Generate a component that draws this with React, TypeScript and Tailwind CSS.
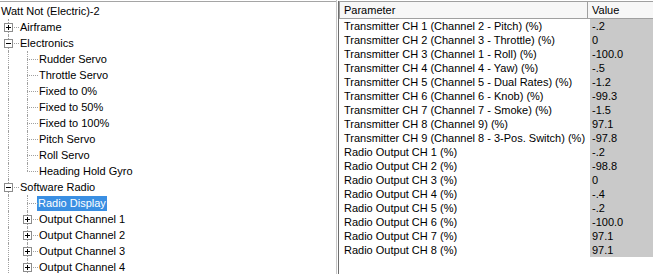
import React from 'react'

type Node = {
  label: string
  guides: boolean[] // ancestor levels that still have siblings below
  last: boolean
  expander?: '+' | '-'
  selected?: boolean
}

const tree: Node[] = [
  { label: 'Airframe', guides: [], last: false, expander: '+' },
  { label: 'Electronics', guides: [], last: false, expander: '-' },
  { label: 'Rudder Servo', guides: [true], last: false },
  { label: 'Throttle Servo', guides: [true], last: false },
  { label: 'Fixed to 0%', guides: [true], last: false },
  { label: 'Fixed to 50%', guides: [true], last: false },
  { label: 'Fixed to 100%', guides: [true], last: false },
  { label: 'Pitch Servo', guides: [true], last: false },
  { label: 'Roll Servo', guides: [true], last: false },
  { label: 'Heading Hold Gyro', guides: [true], last: true },
  { label: 'Software Radio', guides: [], last: false, expander: '-' },
  { label: 'Radio Display', guides: [true], last: false, selected: true },
  { label: 'Output Channel 1', guides: [true], last: false, expander: '+' },
  { label: 'Output Channel 2', guides: [true], last: false, expander: '+' },
  { label: 'Output Channel 3', guides: [true], last: false, expander: '+' },
  { label: 'Output Channel 4', guides: [true], last: false, expander: '+' },
]

const params: [string, string][] = [
  ['Transmitter CH 1 (Channel 2 - Pitch) (%)', '-.2'],
  ['Transmitter CH 2 (Channel 3 - Throttle) (%)', '0'],
  ['Transmitter CH 3 (Channel 1 - Roll) (%)', '-100.0'],
  ['Transmitter CH 4 (Channel 4 - Yaw) (%)', '-.5'],
  ['Transmitter CH 5 (Channel 5 - Dual Rates) (%)', '-1.2'],
  ['Transmitter CH 6 (Channel 6 - Knob) (%)', '-99.3'],
  ['Transmitter CH 7 (Channel 7 - Smoke) (%)', '-1.5'],
  ['Transmitter CH 8 (Channel 9) (%)', '97.1'],
  ['Transmitter CH 9 (Channel 8 - 3-Pos. Switch) (%)', '-97.8'],
  ['Radio Output CH 1 (%)', '-.2'],
  ['Radio Output CH 2 (%)', '-98.8'],
  ['Radio Output CH 3 (%)', '0'],
  ['Radio Output CH 4 (%)', '-.4'],
  ['Radio Output CH 5 (%)', '-.2'],
  ['Radio Output CH 6 (%)', '-100.0'],
  ['Radio Output CH 7 (%)', '97.1'],
  ['Radio Output CH 8 (%)', '97.1'],
]

function Guide() {
  return (
    <div className="relative w-[19px] h-4 shrink-0">
      <div className="absolute left-[8px] top-0 h-4 border-l border-dotted border-[#a0a0a0]" />
    </div>
  )
}

function Connector({ last, expander }: { last: boolean; expander?: '+' | '-' }) {
  return (
    <div className="relative w-[19px] h-4 shrink-0">
      {/* vertical line */}
      <div
        className={
          last
            ? 'absolute left-[8px] top-0 h-[8px] border-l border-dotted border-[#a0a0a0]'
            : 'absolute left-[8px] top-0 h-4 border-l border-dotted border-[#a0a0a0]'
        }
      />
      {/* horizontal line */}
      <div className="absolute left-[8px] top-[8px] w-[11px] border-t border-dotted border-[#a0a0a0]" />
      {expander && (
        <div className="absolute left-[4px] top-[4px] w-[9px] h-[9px] border border-[#8c8c8c] bg-white">
          <div className="absolute left-[1px] top-[3px] w-[5px] h-px bg-black" />
          {expander === '+' && <div className="absolute left-[3px] top-[1px] w-px h-[5px] bg-black" />}
        </div>
      )}
    </div>
  )
}

export default function App() {
  return (
    <div className="w-[653px] h-[274px] bg-white flex overflow-hidden text-[11px] text-black leading-none" style={{ fontFamily: '"Liberation Sans", Arial, sans-serif' }}>
      {/* Tree */}
      <div className="w-[336px] shrink-0 mt-px border-t border-[#a5a5a5] pt-px">
        <div className="h-4 flex items-center pl-px">Watt Not (Electric)-2</div>
        {tree.map((n, i) => (
          <div key={i} className="h-4 flex items-center">
            {n.guides.map((g, j) => (g ? <Guide key={j} /> : <div key={j} className="w-[19px] shrink-0" />))}
            <Connector last={n.last} expander={n.expander} />
            <span className={n.selected ? 'bg-[#3a8fe3] text-white h-[15px] flex items-center px-px -ml-px' : 'pl-px'}>
              {n.label}
            </span>
          </div>
        ))}
      </div>

      {/* Splitter */}
      <div className="w-[2px] shrink-0 border-l border-[#c8c8c8]" />

      {/* Property grid */}
      <div className="flex-1 border-l border-[#6e6e6e] mt-px">
        <div className="flex h-[18px] border-t border-b border-[#a0a0a0] bg-[#f7f7f7]">
          <div className="w-[249px] shrink-0 border-l border-r border-[#a0a0a0] flex items-center pl-[4px]">Parameter</div>
          <div className="flex-1 flex items-center pl-[4px]">Value</div>
        </div>
        {params.map(([p, v], i) => (
          <div key={i} className="flex h-[14px]">
            <div className="w-[251px] shrink-0 flex items-center pl-[5px]">{p}</div>
            <div className="flex-1 flex items-center pl-[2px] bg-[#c9c9c9]">{v}</div>
          </div>
        ))}
      </div>
    </div>
  )
}
